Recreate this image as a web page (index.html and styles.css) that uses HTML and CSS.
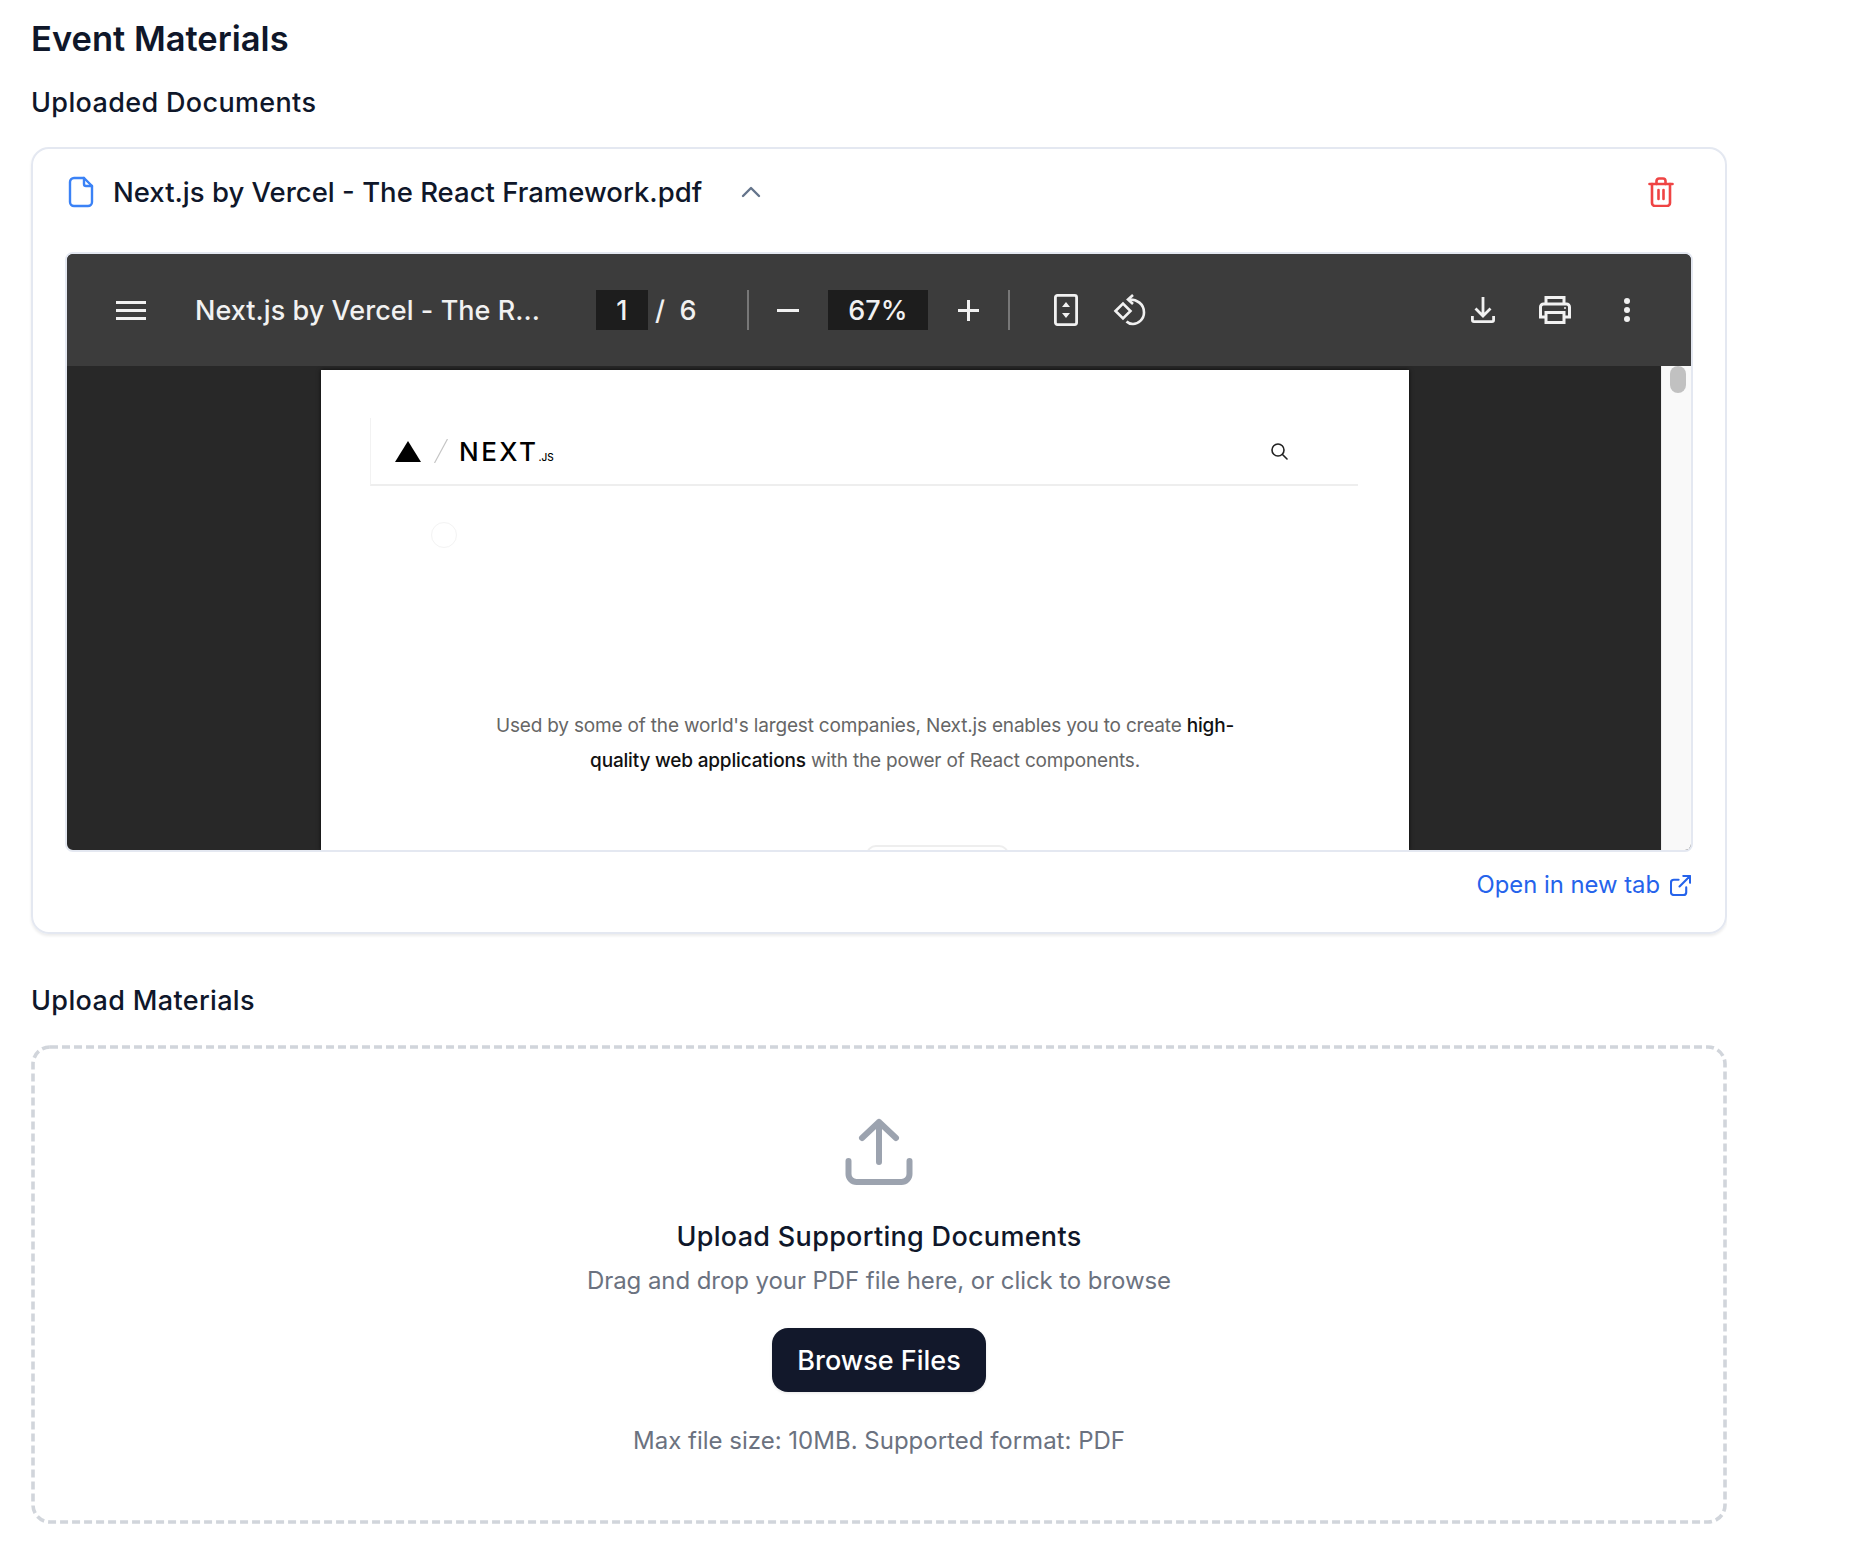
FILE: index.html
```html
<!DOCTYPE html>
<html>
<head>
	<title>Event Materials</title>
	<link rel="stylesheet" href="styles.css">
</head>
<body>
	<h1>Event Materials</h1>
	<h2>Uploaded Documents</h2>

	<section class="card">
		<div class="fileRow">
			<svg class="fileIcon" viewBox="0 0 26 32" fill="none" stroke="#3b82f6" stroke-width="2.4" stroke-linecap="round" stroke-linejoin="round"><path d="M16 2H6a4 4 0 0 0-4 4v20a4 4 0 0 0 4 4h14a4 4 0 0 0 4-4V10z"/><path d="M16 2v6a2 2 0 0 0 2 2h6"/></svg>
			<span class="fileName">Next.js by Vercel - The React Framework.pdf</span>
			<svg class="chevron" viewBox="0 0 20 12" fill="none" stroke="#64748b" stroke-width="2.4" stroke-linecap="round" stroke-linejoin="round"><path d="M2 10l8-8 8 8"/></svg>
			<svg class="trash" viewBox="0 0 26 30" fill="none" stroke="#ef4444" stroke-width="2.6" stroke-linecap="round" stroke-linejoin="round"><path d="M1.5 7h23"/><path d="M4 7v19a3 3 0 0 0 3 3h12a3 3 0 0 0 3-3V7"/><path d="M8.500 7V4a2.500 2.500 0 0 1 2.500-2.500h4A2.500 2.500 0 0 1 17.500 4v3"/><path d="M10.500 13v9M15.500 13v9"/></svg>
		</div>

		<div class="viewer">
			<div class="toolbar">
				<svg class="tbMenu" viewBox="0 0 30 19" fill="#f1f1f1"><path d="M0 0h30v3H0zM0 8h30v3H0zM0 16h30v3H0z"/></svg>
				<span class="tbTitle">Next.js by Vercel - The R...</span>
				<span class="tbBox tbPage">1</span>
				<span class="tbSlash">/</span>
				<span class="tbTotal">6</span>
				<span class="tbSep tbSepA"></span>
				<svg class="tbMinus" viewBox="0 0 22 3" fill="#f1f1f1"><path d="M0 0h22v3H0z"/></svg>
				<span class="tbBox tbZoom">67%</span>
				<svg class="tbPlus" viewBox="0 0 21 21" fill="#f1f1f1"><path d="M9 0h3v9h9v3h-9v9H9v-9H0V9h9z"/></svg>
				<span class="tbSep tbSepB"></span>
				<svg class="tbFit" viewBox="0 0 24 32" fill="none" stroke="#f1f1f1" stroke-width="2.800"><rect x="1.400" y="1.400" width="21.200" height="29.200" rx="2"/><path d="M12 8l4 5H8zM12 24l-4-5h8z" fill="#f1f1f1" stroke="none"/></svg>
				<svg class="tbRotate" viewBox="0 0 34 32" fill="none" stroke="#f1f1f1" stroke-width="2.600"><path d="M2.500 17L10 9.500 17.500 17 10 24.500z"/><path d="M17 5.500c6.500 0 14 4 14 13 0 7-6 11.500-11 11.500-3 0-5-1-6.500-2.500"/><path d="M20 1l-5 4.500 5 4.500" /></svg>
				<svg class="tbDownload" viewBox="0 0 24 26" fill="none" stroke="#f1f1f1" stroke-width="2.800"><path d="M12 0v18M4.500 11.500l7.500 7.500 7.500-7.500"/><path d="M1.400 19v4a1.600 1.600 0 0 0 1.600 1.600h18a1.600 1.600 0 0 0 1.600-1.600v-4"/></svg>
				<svg class="tbPrint" viewBox="0 0 32 28" fill="none" stroke="#f1f1f1" stroke-width="3"><path d="M7 8V1.500h18V8"/><path d="M7 21H1.500V11a3 3 0 0 1 3-3h23a3 3 0 0 1 3 3v10H25"/><path d="M7 16.500h18v10H7z"/><circle cx="26" cy="12" r="1" fill="#f1f1f1" stroke="none"/></svg>
				<svg class="tbDots" viewBox="0 0 6 24" fill="#f1f1f1"><circle cx="3" cy="3" r="3"/><circle cx="3" cy="12" r="3"/><circle cx="3" cy="21" r="3"/></svg>
			</div>

			<div class="viewerBody">
				<div class="pdfPage">
					<div class="pdfHeader">
						<svg class="pdfTriangle" viewBox="0 0 26 21" fill="#000"><path d="M13 0l13 21H0z"/></svg>
						<svg class="pdfSlash" viewBox="0 0 14 24" fill="none" stroke="#c4c4c4" stroke-width="1.200"><path d="M13.500 0L.5 24"/></svg>
						<span class="pdfLogo">NEXT<small>.JS</small></span>
						<svg class="pdfSearch" viewBox="0 0 18 18" fill="none" stroke="#222" stroke-width="1.600" stroke-linecap="round"><circle cx="8" cy="8" r="6"/><path d="M12.500 12.500L17 17"/></svg>
					</div>
					<div class="pdfSpinner"></div>
					<p class="pdfText">Used by some of the world's largest companies, Next.js enables you to create <b>high-<br>quality web applications</b> with the power of React components.</p>
					<div class="pdfPill"></div>
				</div>
				<div class="scrollTrack"><div class="scrollThumb"></div></div>
			</div>
		</div>

		<div class="linkRow">
			<a class="openLink" href="#">Open in new tab
				<svg viewBox="0 0 22 22" fill="none" stroke="#2563eb" stroke-width="2.2" stroke-linecap="round" stroke-linejoin="round"><path d="M17 13v5a3 3 0 0 1-3 3H4a3 3 0 0 1-3-3V8a3 3 0 0 1 3-3h5"/><path d="M14 1h7v7M21 1L10 12"/></svg>
			</a>
		</div>
	</section>

	<h2 class="uploadTitle">Upload Materials</h2>

	<section class="dropzone">
		<svg class="uploadIcon" viewBox="0 0 72 72" fill="none" stroke="#9ca3af" stroke-width="6" stroke-linecap="round" stroke-linejoin="round"><path d="M5.500 45v13a8 8 0 0 0 8 8h45a8 8 0 0 0 8-8V45"/><path d="M19 22L36 6l17 16M36 6v40"/></svg>
		<h3>Upload Supporting Documents</h3>
		<p class="dropHint">Drag and drop your PDF file here, or click to browse</p>
		<button class="browseBtn">Browse Files</button>
		<p class="dropNote">Max file size: 10MB. Supported format: PDF</p>
	</section>
</body>
</html>
```

FILE: styles.css
```css
body{
	margin:0;
	padding:12px 0 0 31px;
	width:1696px;
	background:#fff;
	color:#0f172a;
	font-family:Inter, "Liberation Sans", sans-serif;
}

h1{
	margin:0 0 17px;
	font-size:34.5px;
	line-height:54px;
	font-weight:600;
}

h2{
	margin:0 0 24px;
	font-size:27px;
	line-height:40px;
	font-weight:500;
	letter-spacing:.35px;
}

.uploadTitle{
	margin-top:47px;
}

/* document card */
.card{
	box-sizing:border-box;
	height:787px;
	padding:13px 32px 0;
	border:2px solid #e4e8f1;
	border-radius:18px;
	box-shadow:0 2px 3px rgba(0,0,0,.08);
}

	.fileRow{
		display:flex;
		align-items:center;
		height:60px;
		margin-bottom:30px;
		padding:0 19px 0 3px;
	}

		.fileIcon{
			width:26px;
			height:32px;
		}

		.fileName{
			margin-left:19px;
			font-size:27.5px;
			font-weight:500;
		}

		.chevron{
			width:20px;
			height:12px;
			margin-left:39px;
		}

		.trash{
			width:26px;
			height:30px;
			margin-left:auto;
		}

/* pdf viewer */
.viewer{
	box-sizing:border-box;
	height:600px;
	border:2px solid #e4e8f1;
	border-radius:8px;
	overflow:hidden;
	background:#282828;
}

	.toolbar{
		display:flex;
		align-items:center;
		box-sizing:border-box;
		height:112px;
		padding:0 59px 0 49px;
		background:#3c3c3c;
		color:#f1f1f1;
		font-size:27px;
		font-weight:500;
		letter-spacing:.05px;
	}

		.toolbar svg{
			flex:none;
		}

		.tbMenu{width:30px;height:19px;}
		.tbTitle{width:346px;margin-left:49px;white-space:nowrap;}

		.tbBox{
			height:40px;
			line-height:42px;
			text-align:center;
			background:#1d1d1d;
		}

		.tbPage{width:52px;margin-left:55px;}
		.tbSlash{width:12px;margin-left:6px;text-align:center;}
		.tbTotal{width:22px;margin-left:11px;text-align:center;}

		.tbSep{
			width:2px;
			height:40px;
			background:#777;
		}

		.tbSepA{margin-left:48px;}
		.tbSepB{margin-left:29px;}
		.tbMinus{width:22px;height:3px;margin-left:28px;}
		.tbZoom{width:100px;margin-left:29px;}
		.tbPlus{width:21px;height:21px;margin-left:30px;}
		.tbFit{width:24px;height:32px;margin-left:44px;}
		.tbRotate{width:34px;height:32px;margin-left:35px;}
		.tbDownload{width:24px;height:26px;margin-left:auto;}
		.tbPrint{width:32px;height:28px;margin-left:44px;}
		.tbDots{width:6px;height:24px;margin-left:53px;margin-right:2px;}

	.viewerBody{
		display:flex;
		height:484px;
		overflow:hidden;
	}

		.pdfPage{
			flex:none;
			box-sizing:border-box;
			width:1088px;
			height:480px;
			margin:4px 0 0 254px;
			padding:48px 0 0 49px;
			overflow:hidden;
			background:#fff;
			box-shadow:0 0 4px rgba(0,0,0,.8);
		}

			.pdfHeader{
				display:flex;
				align-items:center;
				box-sizing:border-box;
				width:988px;
				height:68px;
				padding-left:24px;
				border-left:1px solid #f2f2f2;
				border-bottom:2px solid #eee;
			}

				.pdfTriangle{width:26px;height:21px;}
				.pdfSlash{width:14px;height:24px;margin-left:13px;}

				.pdfLogo{
					margin-left:11px;
					color:#000;
					font-size:26px;
					font-weight:500;
					letter-spacing:2.5px;
				}

				.pdfLogo small{
					font-size:10px;
					letter-spacing:0;
				}

				.pdfSearch{
					width:18px;
					height:18px;
					margin-left:auto;
					margin-right:70px;
				}

			.pdfSpinner{
				box-sizing:border-box;
				width:26px;
				height:26px;
				margin:36px 0 0 61px;
				border:1px solid #f3f3f3;
				border-radius:50%;
			}

			.pdfText{
				width:990px;
				margin:160px 0 0;
				color:#666;
				font-size:19px;
				line-height:35px;
				letter-spacing:-.18px;
				text-align:center;
			}

				.pdfText b{
					color:#111;
					font-weight:500;
				}

			.pdfPill{
				box-sizing:border-box;
				width:143px;
				height:40px;
				margin:67px 0 0 496px;
				border:2px solid #eee;
				border-radius:10px;
			}

		.scrollTrack{
			flex:none;
			box-sizing:border-box;
			width:30px;
			height:484px;
			margin-left:auto;
			padding-left:8px;
			background:#f9f9f9;
			border-left:1px solid #eee;
		}

			.scrollThumb{
				width:16px;
				height:27px;
				background:#c1c1c1;
				border-radius:8px;
			}

/* link under viewer */
.linkRow{
	display:flex;
	justify-content:flex-end;
	margin-top:15px;
	padding-right:2px;
	line-height:36px;
}

	.openLink{
		display:flex;
		align-items:center;
		gap:10px;
		color:#2563eb;
		font-size:23.8px;
		text-decoration:none;
		white-space:nowrap;
	}

		.openLink svg{
			width:21px;
			height:21px;
		}

/* upload area: dash pattern drawn as svg, css dashes come out too long */
.dropzone{
	box-sizing:border-box;
	height:479px;
	padding-top:71px;
	background:url("data:image/svg+xml,%3Csvg xmlns='http://www.w3.org/2000/svg' width='1696' height='479'%3E%3Crect x='2' y='2' width='1692' height='475' rx='17' fill='none' stroke='%23d1d5db' stroke-width='3.6' stroke-dasharray='8 4'/%3E%3C/svg%3E") no-repeat;
	text-align:center;
}

	.uploadIcon{
		display:block;
		width:72px;
		height:72px;
		margin:0 auto;
	}

	h3{
		margin:29px 0 0;
		font-size:27px;
		line-height:40px;
		font-weight:500;
		letter-spacing:.3px;
	}

	.dropHint, .dropNote{
		margin:0;
		color:#6b7280;
		font-size:24px;
		line-height:36px;
	}

	.dropHint{
		margin-top:6px;
		letter-spacing:-.07px;
	}

	.browseBtn{
		display:block;
		width:214px;
		height:64px;
		margin:29px auto 0;
		padding:0;
		border:0;
		border-radius:16px;
		background:#12182b;
		color:#fff;
		font-family:inherit;
		font-size:27px;
		font-weight:500;
		box-shadow:0 1px 3px rgba(0,0,0,.1);
	}

	.dropNote{
		margin-top:31px;
	}
```
